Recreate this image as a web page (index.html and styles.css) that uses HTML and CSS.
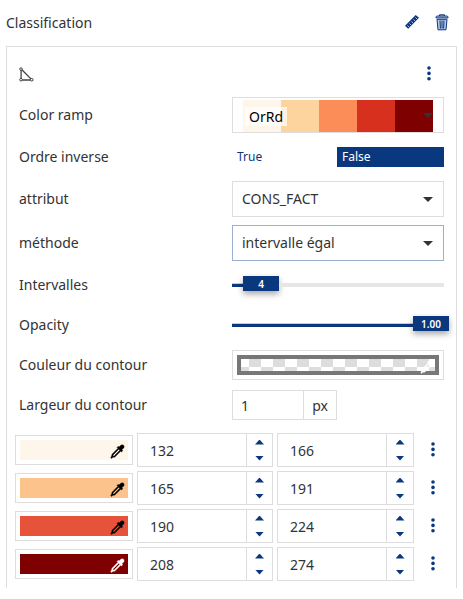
FILE: index.html
```html
<!DOCTYPE html>
<html lang="fr">
<head>
<meta charset="utf-8">
<title>Classification</title>
<link rel="stylesheet" href="styles.css">
</head>
<body>
<svg class="defs" width="0" height="0">
  <symbol id="dropper" viewBox="0 0 16 16">
    <path fill-rule="evenodd" d="M9.6 3.2 11.6 1.3C13.6-.4 16.1 2 14.6 4.2L12.7 6.2 13.6 7.2 12.3 8.4 11.4 7.6 5 14 3.2 14.2 1.6 15.4.7 14.6 1.7 12.8 2.1 11 8.4 4.6 7.5 3.7 8.7 2.4ZM9.3 5.6 3.3 11.6 3.1 13 4.4 12.8 10.4 6.7Z"/>
  </symbol>
  <symbol id="dots" viewBox="0 0 4 15">
    <circle cx="2" cy="2" r="1.8"/><circle cx="2" cy="7.4" r="1.8"/><circle cx="2" cy="12.8" r="1.8"/>
  </symbol>
</svg>
<header class="head">
  <h1 class="title">Classification</h1>
  <svg class="ruler" width="16" height="16" viewBox="0 0 16 16">
    <path d="M1 11.7 11.7 1 15 3.7 4.2 14.8Z" fill="#0a387e"/>
    <path d="M3.4 11.4l1.6 1.6M5.4 9.4l1.6 1.6M7.4 7.4l1.6 1.6M9.4 5.4l1.6 1.6M11.4 3.4l1.6 1.6" stroke="#b9cbe5" stroke-width=".9"/>
  </svg>
  <svg class="trash" width="14" height="17" viewBox="0 0 14 17">
    <path d="M4.5 2V.8h5V2M1 3.9V3Q1 2 2.5 2h9Q13 2 13 3v.9ZM2 5.3l1 10.5h8l1-10.5ZM5 6.5l.4 8M7 6.5v8M9 6.5l-.4 8" fill="#b9c9e2" stroke="#0a387e" stroke-width="1"/>
  </svg>
</header>
<main class="panel">
  <div class="bar">
    <svg class="poly" width="15" height="15" viewBox="0 0 15 15" fill="#fff" stroke="#444" stroke-width="1">
      <path d="M2.1 2v11h11L2.1 2" stroke-width="1.3"/><circle cx="2" cy="2.1" r="1.3"/><circle cx="2" cy="12.7" r="1.3"/><circle cx="12.7" cy="12.7" r="1.3"/>
    </svg>
    <svg class="dots"><use href="#dots"/></svg>
  </div>
  <div class="row tall"><span class="label">Color ramp</span>
    <div class="select ramp"><div class="colors"><i class="c1"></i><i class="c2"></i><i class="c3"></i><i class="c4"></i><i class="c5"></i></div><span class="tag">OrRd</span><b class="arrow"></b></div>
  </div>
  <div class="row"><span class="label">Ordre inverse</span>
    <div class="toggle"><span>True</span><span class="on">False</span></div>
  </div>
  <div class="row tall"><span class="label">attribut</span><div class="select">CONS_FACT<b class="arrow"></b></div></div>
  <div class="row tall"><span class="label">méthode</span><div class="select focus">intervalle égal<b class="arrow"></b></div></div>
  <div class="row"><span class="label">Intervalles</span>
    <div class="slider"><i class="fill low"></i><span class="handle">4</span><i class="track"></i></div>
  </div>
  <div class="row"><span class="label">Opacity</span>
    <div class="slider"><i class="fill full"></i><span class="handle end">1.00</span></div>
  </div>
  <div class="row"><span class="label">Couleur du contour</span>
    <div class="color wide"><div class="outline"><svg class="pick light"><use href="#dropper"/></svg></div></div>
  </div>
  <div class="row"><span class="label">Largeur du contour</span>
    <div class="measure"><span class="value">1</span><span class="unit">px</span></div>
  </div>
  <div class="classes">
    <div class="class"><div class="color"><div class="swatch s1"><svg class="pick"><use href="#dropper"/></svg></div></div>
      <div class="num"><span>132</span><div class="spin"><b class="up"></b><b class="down"></b></div></div>
      <div class="num"><span>166</span><div class="spin"><b class="up"></b><b class="down"></b></div></div><svg class="dots"><use href="#dots"/></svg></div>
    <div class="class"><div class="color"><div class="swatch s2"><svg class="pick"><use href="#dropper"/></svg></div></div>
      <div class="num"><span>165</span><div class="spin"><b class="up"></b><b class="down"></b></div></div>
      <div class="num"><span>191</span><div class="spin"><b class="up"></b><b class="down"></b></div></div><svg class="dots"><use href="#dots"/></svg></div>
    <div class="class"><div class="color"><div class="swatch s3"><svg class="pick"><use href="#dropper"/></svg></div></div>
      <div class="num"><span>190</span><div class="spin"><b class="up"></b><b class="down"></b></div></div>
      <div class="num"><span>224</span><div class="spin"><b class="up"></b><b class="down"></b></div></div><svg class="dots"><use href="#dots"/></svg></div>
    <div class="class"><div class="color"><div class="swatch s4"><svg class="pick light"><use href="#dropper"/></svg></div></div>
      <div class="num"><span>208</span><div class="spin"><b class="up"></b><b class="down"></b></div></div>
      <div class="num"><span>274</span><div class="spin"><b class="up"></b><b class="down"></b></div></div><svg class="dots"><use href="#dots"/></svg></div>
  </div>
</main>
</body>
</html>
```
FILE: styles.css
```css
* { box-sizing: border-box; }
body {
  margin: 0;
  height: 599px;
  overflow: hidden;
  background: #fff;
  color: #333;
  font: 14px/20px "Noto Sans", sans-serif;
}
i, b, svg { display: block; flex: none; }
.defs { position: absolute; }
.head { height: 46px; display: flex; align-items: center; padding: 0 14px 2px 6px; }
.title { margin: 2px auto 0 0; font-size: 14px; font-weight: 400; }
.ruler { margin-right: 15px; }
.panel {
  width: 451px;
  height: 542px;
  margin-left: 6px;
  padding: 6px 12px 0;
  border: 1px solid #ddd;
  border-bottom: 0;
}
.bar { height: 40px; display: flex; justify-content: space-between; align-items: center; padding-right: 13px; }
.poly { margin-top: 2px; }
.dots { width: 4px; height: 15px; fill: #0a387e; }
.row { height: 40px; display: flex; align-items: center; }
.tall { height: 44px; }
.label { width: 213px; flex: none; }
.select {
  width: 212px;
  height: 36px;
  display: flex;
  align-items: center;
  justify-content: space-between;
  padding: 0 10px 0 9px;
  border: 1px solid #ddd;
}
.focus { border-color: #9bb0d0; }
.arrow { border: 5px solid transparent; border-top-color: #333; border-bottom: 0; }
.ramp { position: relative; padding-left: 12px; color: #000; }
.colors { position: absolute; left: 10px; top: 2px; width: 190px; height: 32px; display: flex; }
.colors i { width: 38px; }
.c1 { background: #fef6ea; }
.c2 { background: #fdd49e; }
.c3 { background: #fc8d59; }
.c4 { background: #d7301f; }
.c5 { background: #7f0000; }
.tag { position: relative; width: 42px; height: 19px; margin-top: 2px; line-height: 20px; padding-left: 4px; background: rgba(255, 255, 255, .7); }
.ramp .arrow { position: relative; }
.toggle { width: 212px; display: flex; font-size: 12px; color: #0a387e; }
.toggle span { width: 105px; height: 20px; padding-left: 5px; }
.toggle .on { width: 107px; background: #0a387e; color: #fff; }
.slider { width: 217px; height: 20px; display: flex; align-items: center; }
.fill { height: 4px; background: #0a387e; border-top: 1px solid #c8cdd6; }
.low { width: 11px; }
.full { width: 181px; }
.track { width: 165px; height: 4px; background: #e6e6e6; }
.handle {
  width: 36px;
  height: 15px;
  margin-bottom: 3px;
  background: #0a387e;
  color: #fff;
  font-size: 10px;
  font-weight: 600;
  line-height: 16px;
  text-align: center;
  box-shadow: 0 3px 6px rgba(0, 0, 0, .35);
}
.color { width: 118px; height: 30px; padding: 4px; border: 1px solid #ddd; }
.wide { width: 212px; }
.outline {
  height: 20px;
  border: 4px solid #777;
  display: flex;
  justify-content: flex-end;
  background: repeating-conic-gradient(#ddd 0 25%, #fff 0 50%) -4px -4px / 24px 24px padding-box;
}
.swatch { height: 20px; display: flex; justify-content: flex-end; padding: 4px 3px 0 0; }
.pick { width: 15px; height: 15px; fill: #000; stroke: #000; stroke-width: .4; }
.light { fill: #fff; stroke: #fff; }
.s1 { background: #fff6eb; }
.s2 { background: #fdc38d; }
.s3 { background: #e7533a; }
.s4 { background: #7f0000; }
.measure { width: 105px; height: 30px; display: flex; border: 1px solid #ddd; line-height: 29px; }
.value { width: 71px; padding-left: 8px; border-right: 1px solid #ddd; }
.unit { flex: 1; text-align: center; }
.classes { margin: 8px 0 0 -4px; display: grid; gap: 4px; }
.class { height: 34px; display: flex; align-items: center; gap: 4px; }
.num { width: 136px; height: 34px; display: flex; border: 1px solid #ddd; line-height: 34px; }
.num + .num { width: 137px; }
.num span { flex: 1; padding-left: 12px; }
.spin {
  width: 26px;
  border-left: 1px solid #ddd;
  display: flex;
  flex-direction: column;
  align-items: center;
  justify-content: center;
  gap: 11px;
}
.num + .num .spin { width: 27px; }
.up, .down { width: 9px; height: 5px; background: #0a387e; clip-path: polygon(50% 0, 100% 100%, 0 100%); }
.down { clip-path: polygon(0 0, 100% 0, 50% 100%); }
.class .dots { margin: 0 0 2px 13px; }
```
